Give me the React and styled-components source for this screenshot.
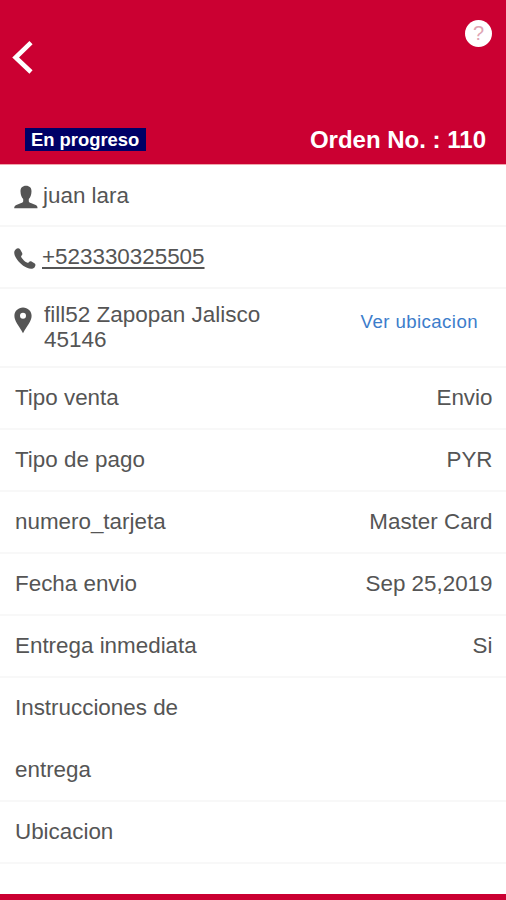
import React from 'react'
import styled, { createGlobalStyle } from 'styled-components'

const details = [
	{ label: 'Tipo venta', value: 'Envio' },
	{ label: 'Tipo de pago', value: 'PYR' },
	{ label: 'numero_tarjeta', value: 'Master Card' },
	{ label: 'Fecha envio', value: 'Sep 25,2019' },
	{ label: 'Entrega inmediata', value: 'Si' },
	{ label: 'Instrucciones de entrega', value: '' },
	{ label: 'Ubicacion', value: '' },
]

function App() {
	return (
		<Container>
			<GlobalStyle />
			<Header>
				<TopBar>
					<BackButton aria-label="Volver">
						<svg width="22" height="34" viewBox="0 0 22 34">
							<path d="M19 2.600 L3.600 17.500 L19 32" fill="none" stroke="#fff" strokeWidth="4.600" />
						</svg>
					</BackButton>
					<HelpButton>?</HelpButton>
				</TopBar>
				<OrderInfo>
					<Status>En progreso</Status>
					<OrderNumber>Orden No. : 110</OrderNumber>
				</OrderInfo>
			</Header>
			<ContactRow>
				<Icon width="24" height="24" viewBox="0 0 24 24">
					<path d="M12 .8C8.400.8 6.400 3 6.500 6.500c.1 3.700 1.200 6 2.700 7.400v2.400c0 .8-.7 1.300-2 1.800L2.300 20C1 20.600.2 21.400.2 23.300h23.300c0-1.900-.5-2.700-1.800-3.300l-4.900-1.900c-1.300-.5-2-1-2-1.800v-2.400c1.500-1.400 2.600-3.700 2.700-7.400C17.600 3 15.600.8 12 .8z" />
				</Icon>
				<Name>juan lara</Name>
			</ContactRow>
			<ContactRow>
				<Icon width="24" height="24" viewBox="0 0 24 24">
					<path d="M1.600 2.400C3.500.8 5 .9 6.200 2.600L7.900 5.500C8.700 6.900 8.400 7.800 7.400 8.800C6.900 9.400 7.100 10 7.600 10.700C8.800 12.500 10.800 14.400 12.900 15.600C13.700 16 14.300 15.900 14.800 15.200C15.600 14.200 16.600 14 17.900 14.700L20.400 16.200C21.800 17.200 21.800 18.800 20.500 20.400C18.900 22.200 16.100 22.200 13 20.800C7.800 18.400 3.200 14 1 9C-.2 6.200 0 3.900 1.600 2.400z" />
				</Icon>
				<Phone href="tel:+523330325505">+523330325505</Phone>
			</ContactRow>
			<AddressRow>
				<Pin width="18" height="27" viewBox="0 0 18 27">
					<path fillRule="evenodd" d="M9 .5C4.200.5.400 4.100.400 8.800c0 5.100 4.100 9.500 8.600 17.400 4.500-7.900 8.600-12.300 8.600-17.400C17.600 4.100 13.800.5 9 .5zm0 5.200a3 3 0 1 1 0 6 3 3 0 0 1 0-6z" />
				</Pin>
				<Address>fill52 Zapopan Jalisco 45146</Address>
				<MapLink>Ver ubicacion</MapLink>
			</AddressRow>
			{details.map((item) => (
				<Row key={item.label}>
					<Label>{item.label}</Label>
					<Value>{item.value}</Value>
				</Row>
			))}
			<Footer />
		</Container>
	)
}

const GlobalStyle = createGlobalStyle`
	body {
		margin: 0;
		background-color: #fff;
	}
	* {
		box-sizing: border-box;
	}
`;
const Container = styled.div`
	width: 100%;
	height: 900px;
	display: flex;
	flex-direction: column;
	overflow: hidden;
	background-color: #fff;
	color: #555;
	font-family: "Liberation Sans", Arial, sans-serif;
	font-size: 22.4px;
`;
const Header = styled.div`
	height: 165px;
	flex-shrink: 0;
	display: flex;
	flex-direction: column;
	justify-content: space-between;
	background-color: #cb0032;
	border-bottom: 1px solid #f0a5ac;
`;
const TopBar = styled.div`
	display: flex;
	justify-content: space-between;
	align-items: flex-start;
	padding: 20px 14px 0 12px;
`;
const BackButton = styled.button`
	margin: 20px 0 0;
	padding: 0;
	border: none;
	background: none;
	cursor: pointer;
	svg{
		display: block;
	}
`;
const HelpButton = styled.button`
	width: 27px;
	height: 27px;
	padding: 0;
	border: none;
	border-radius: 50%;
	background-color: #fff;
	color: #dfa5b4;
	font-family: inherit;
	font-size: 20px;
	line-height: 27px;
	cursor: pointer;
`;
const OrderInfo = styled.div`
	display: flex;
	justify-content: space-between;
	align-items: center;
	padding: 0 20px 10px 25px;
	color: #fff;
	font-weight: bold;
`;
const Status = styled.div`
	height: 23px;
	padding: 0 7px 0 6px;
	background-color: #000066;
	font-size: 18.4px;
	line-height: 24px;
`;
const OrderNumber = styled.div`
	font-size: 24px;
	line-height: 29px;
`;
const ContactRow = styled.div`
	height: 62px;
	flex-shrink: 0;
	display: flex;
	align-items: center;
	padding-left: 14px;
	border-bottom: 2px solid #f7f7f7;
`;
const Icon = styled.svg`
	flex-shrink: 0;
	margin-top: 4px;
	fill: #555;
`;
const Name = styled.div`
	margin-left: 5px;
	padding-top: 2px;
`;
const Phone = styled.a`
	margin-left: 4px;
	color: #555;
	text-decoration: underline;
	text-decoration-thickness: 1.5px;
	text-underline-offset: 3px;
`;
const AddressRow = styled.div`
	height: 79px;
	flex-shrink: 0;
	display: flex;
	align-items: flex-start;
	padding: 13px 28px 0 14px;
	border-bottom: 2px solid #f7f7f7;
`;
const Pin = styled.svg`
	margin-top: 5px;
	flex-shrink: 0;
	fill: #555;
`;
const Address = styled.div`
	width: 240px;
	margin-left: 12px;
	font-size: 22.5px;
	line-height: 25px;
`;
const MapLink = styled.div`
	margin: 8px 0 0 auto;
	color: #3c7dcb;
	font-size: 18.7px;
	letter-spacing: 0.4px;
	line-height: 24px;
	cursor: pointer;
`;
const Row = styled.div`
	flex-shrink: 0;
	display: flex;
	justify-content: space-between;
	padding: 0 13.5px 0 15px;
	box-shadow: inset 0 -2px 0 #f8f8f8;
	line-height: 62px;
`;
const Label = styled.div`
	width: 200px;
	margin: -1px 0 1px;
`;
const Value = styled.div`
	margin: -1px 0 1px;
	text-align: right;
`;
const Footer = styled.div`
	height: 6px;
	flex-shrink: 0;
	margin-top: auto;
	background-color: #cb0032;
`;
export default App
